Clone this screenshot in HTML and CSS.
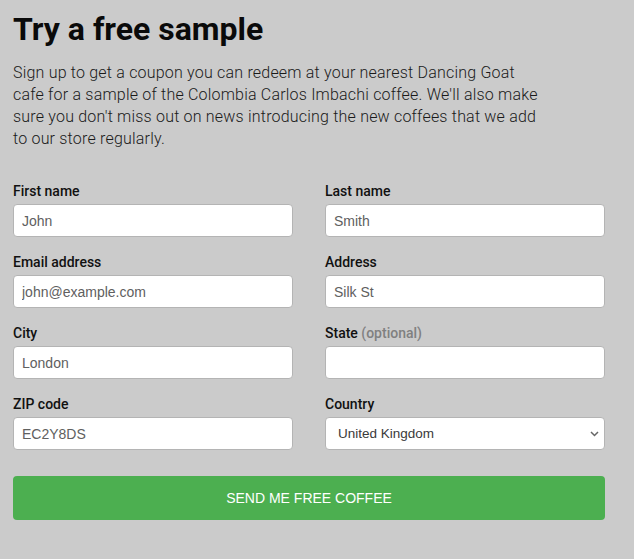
FILE: index.html
```html
<!DOCTYPE html>
<html lang="en">
<head>
<meta charset="utf-8">
<title>Try a free sample</title>
<link rel="stylesheet" href="styles.css">
</head>
<body>
<main class="page">
  <h1 class="title">Try a free sample</h1>
  <p class="intro">Sign up to get a coupon you can redeem at your nearest Dancing Goat cafe for a sample of the Colombia Carlos Imbachi coffee. We'll also make sure you don't miss out on news introducing the new coffees that we add to our store regularly.</p>
  <form class="form">
    <div class="grid">
      <div class="field">
        <label class="label">First name</label>
        <input class="input" type="text" placeholder="John">
      </div>
      <div class="field">
        <label class="label">Last name</label>
        <input class="input" type="text" placeholder="Smith">
      </div>
      <div class="field">
        <label class="label">Email address</label>
        <input class="input" type="text" placeholder="john@example.com">
      </div>
      <div class="field">
        <label class="label">Address</label>
        <input class="input" type="text" placeholder="Silk St">
      </div>
      <div class="field">
        <label class="label">City</label>
        <input class="input" type="text" placeholder="London">
      </div>
      <div class="field">
        <label class="label">State <span class="optional">(optional)</span></label>
        <input class="input" type="text">
      </div>
      <div class="field">
        <label class="label">ZIP code</label>
        <input class="input" type="text" placeholder="EC2Y8DS">
      </div>
      <div class="field">
        <label class="label">Country</label>
        <div class="select">
          <span class="select-value">United Kingdom</span>
          <svg class="chevron" width="9" height="6" viewBox="0 0 9 6"><path d="M1 1l3.5 3.5L8 1" fill="none" stroke="#666" stroke-width="1.5"/></svg>
        </div>
      </div>
    </div>
    <button class="submit" type="button">SEND ME FREE COFFEE</button>
  </form>
</main>
</body>
</html>
```

FILE: styles.css
```css
* { box-sizing: border-box; }
html, body { margin: 0; padding: 0; }
body {
  background: #cbcbcb;
  font-family: Roboto, "Noto Sans", sans-serif;
  color: #111;
}
.page {
  padding: 10px 29px 0 13px;
}
.title {
  margin: 0;
  font-size: 32px;
  line-height: 38.4px;
  font-weight: 700;
  color: #0a0a0a;
}
.intro {
  margin: 14px 0 0;
  width: 535px;
  font-size: 16px;
  line-height: 22px;
  font-weight: 300;
  letter-spacing: 0.2px;
  color: #1a1a1a;
}
.form {
  margin-top: 32px;
}
.grid {
  display: grid;
  grid-template-columns: 280px 280px;
  column-gap: 32px;
  row-gap: 16px;
}
.field {
  display: flex;
  flex-direction: column;
}
.label {
  font-size: 14px;
  line-height: 18px;
  font-weight: 500;
  color: #111;
  margin-bottom: 4px;
}
.optional {
  color: #808080;
}
.input {
  height: 33px;
  width: 100%;
  border: 1px solid #b4b4b4;
  border-radius: 4px;
  background: #fff;
  padding: 0 8px;
  font-family: "Liberation Sans", Arial, sans-serif;
  font-size: 14px;
  color: #555;
  outline: none;
}
.input::placeholder { color: #606060; opacity: 1; }
.select {
  height: 33px;
  border: 1px solid #b4b4b4;
  border-radius: 4px;
  background: #fff;
  padding: 0 5px 0 12px;
  display: flex;
  align-items: center;
  justify-content: space-between;
  font-family: "Liberation Sans", Arial, sans-serif;
  font-size: 13.5px;
  color: #3a3a3a;
}
.chevron { display: block; }
.submit {
  display: block;
  margin-top: 26px;
  width: 592px;
  height: 44px;
  border: none;
  border-radius: 4px;
  background: #4caf50;
  color: #fff;
  font-family: "Liberation Sans", Arial, sans-serif;
  font-size: 14px;
  cursor: pointer;
}
```
